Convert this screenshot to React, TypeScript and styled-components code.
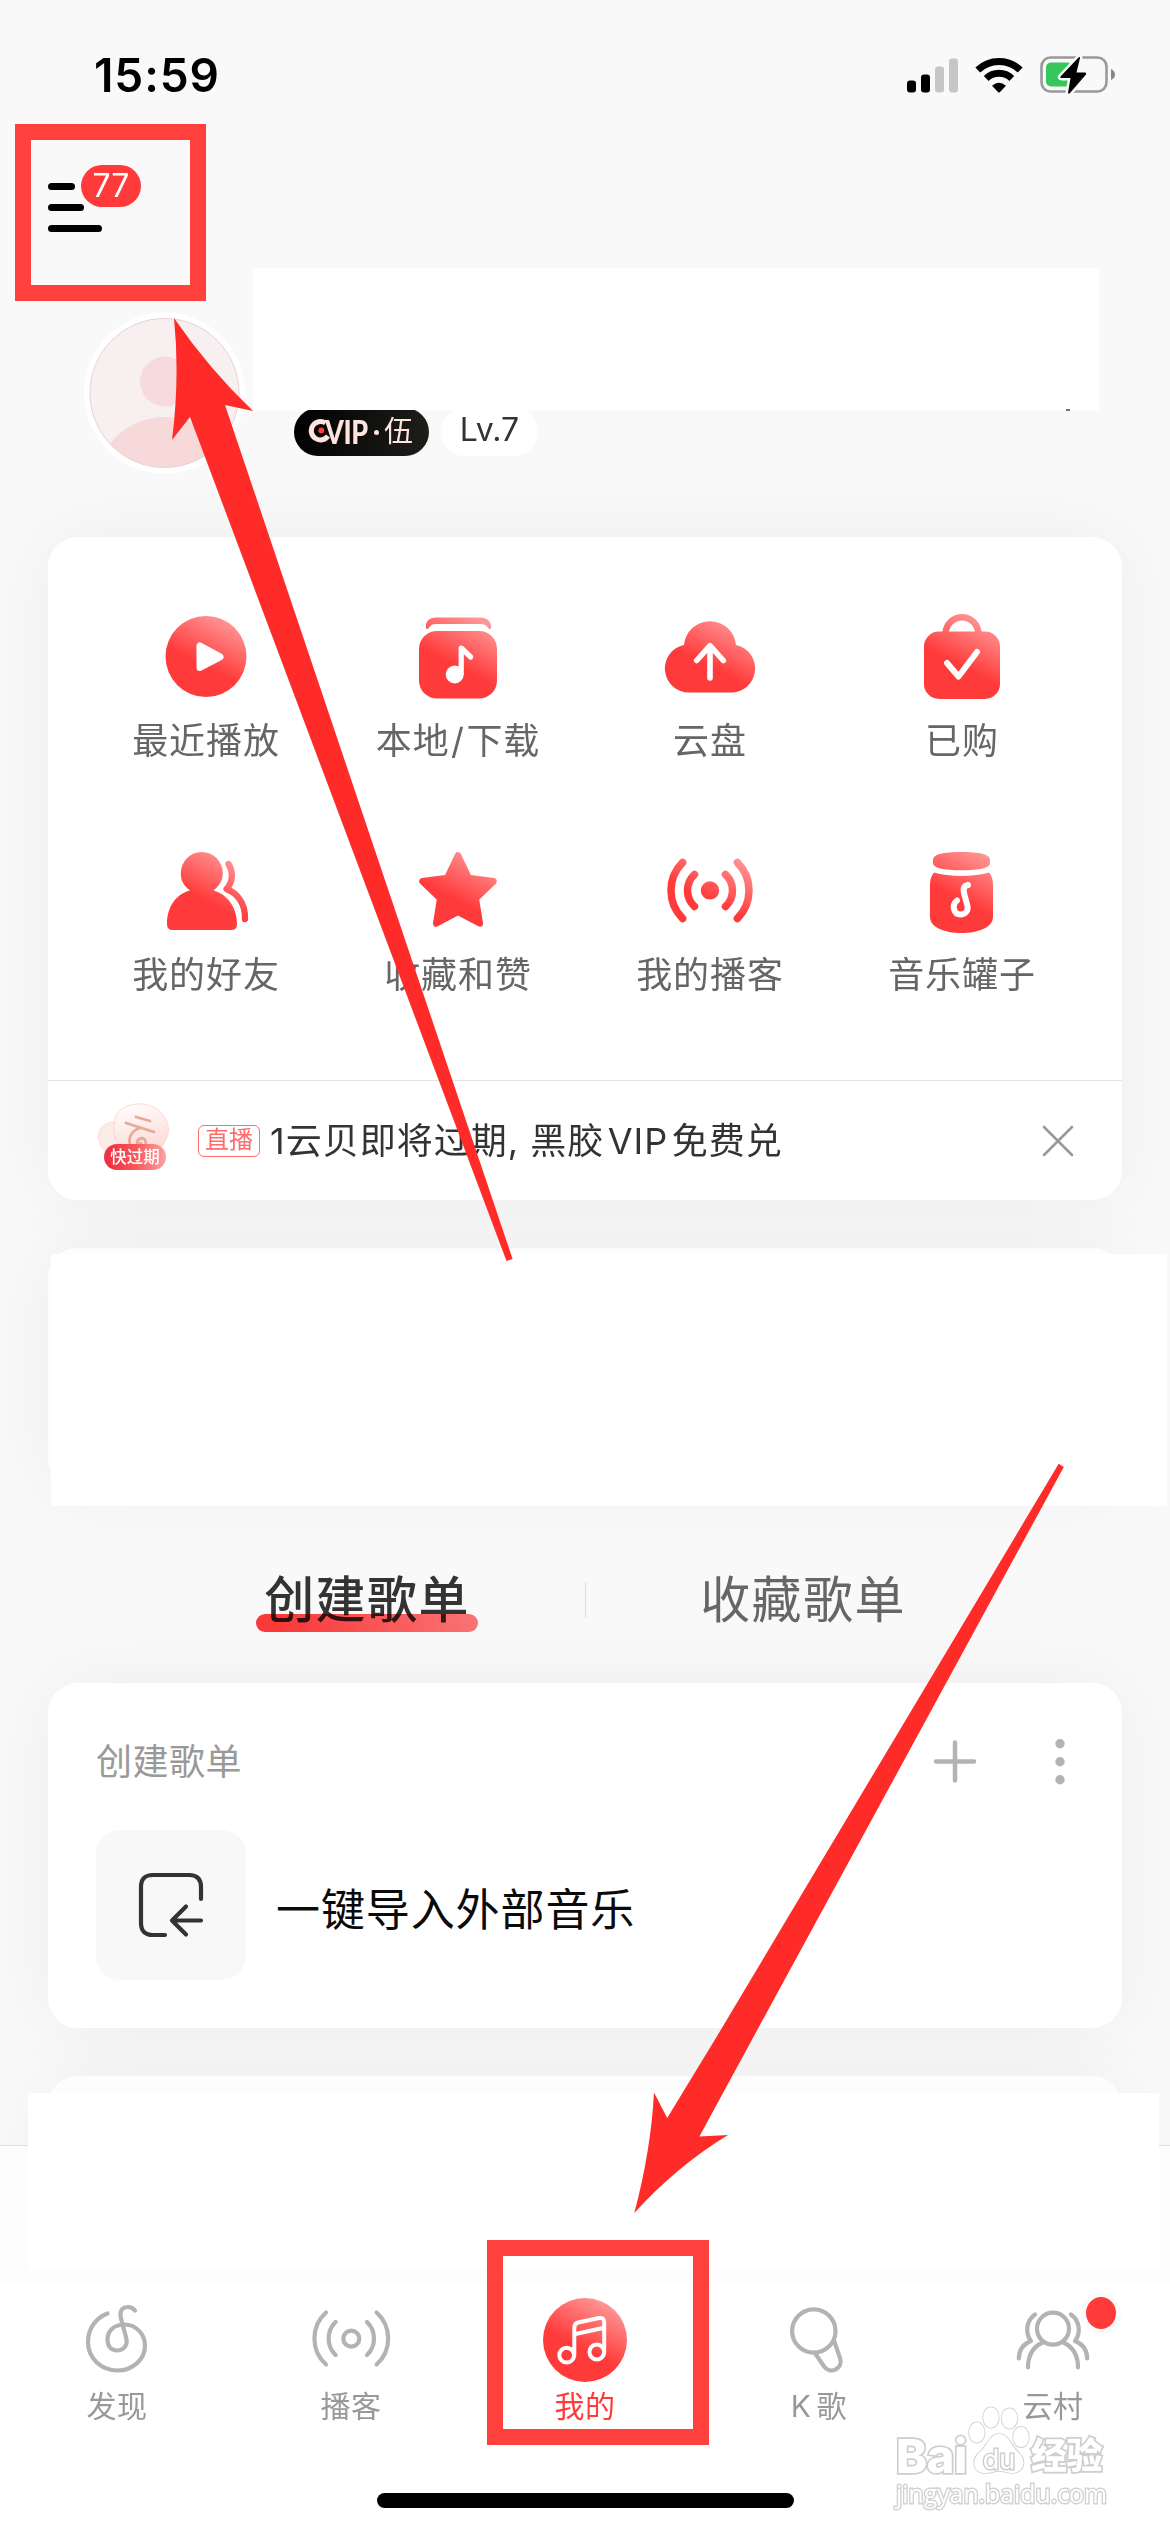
import React from "react";
import styled, { createGlobalStyle, css } from "styled-components";

const RED = "#ff3a3a";
const GREY = "#b3b3b3";

const GlobalStyle = createGlobalStyle`
  * { box-sizing: border-box; }
  body {
    margin: 0;
    background: #fff;
    font-family: Inter, "Noto Sans CJK SC", sans-serif;
  }
  svg { display: block; flex: none; }
`;

const Screen = styled.div`
  position: relative;
  z-index: 0;
  width: 1170px;
  height: 2532px;
  overflow: hidden;
  display: flex;
  flex-direction: column;
  background: #faf9fa;
`;

/* ---------- status bar ---------- */

const StatusBar = styled.header`
  flex: none;
  height: 149px;
  padding: 0 55px 0 94px;
  display: flex;
  align-items: center;
  justify-content: space-between;
`;

const Clock = styled.span`
  font-size: 46px;
  font-weight: 600;
  line-height: 50px;
  letter-spacing: 0.9px;
  color: #000;
`;

const StatusIcons = styled.div`
  display: flex;
  align-items: center;
  gap: 17px;
`;

/* ---------- header ---------- */

const TopBar = styled.div`
  flex: none;
  height: 119px;
  padding: 16px 48px 0;
  display: flex;
  align-items: flex-start;
`;

const MenuButton = styled.div`
  position: relative;
  display: flex;
  flex-direction: column;
  gap: 14px;
  padding-top: 18px;
`;

const MenuLine = styled.i<{ $w: number }>`
  width: ${(p) => p.$w}px;
  height: 7px;
  border-radius: 4px;
  background: #000;
`;

const CountBadge = styled.span`
  position: absolute;
  left: 33px;
  top: 0;
  width: 60px;
  height: 42px;
  border-radius: 21px;
  background: ${RED};
  color: #fff;
  font-size: 32px;
  line-height: 42px;
  text-align: center;
`;

const Profile = styled.section`
  flex: none;
  height: 269px;
  padding-left: 84px;
  display: flex;
  align-items: flex-start;
`;

const Avatar = styled.div`
  margin-top: 44px;
  width: 161px;
  height: 162px;
`;

const ProfileInfo = styled.div`
  margin-left: 8px;
  display: flex;
  flex-direction: column;
`;

const NameBlock = styled.div`
  position: relative;
  z-index: 1;
  width: 846px;
  height: 142px;
  background: #fff;
  &::after {
    content: "";
    position: absolute;
    left: 813px;
    bottom: -1px;
    width: 4px;
    height: 2px;
    background: #777;
  }
`;

const Badges = styled.div`
  margin: -2px 0 0 41px;
  display: flex;
  gap: 12px;
`;

const VipBadge = styled.span`
  width: 135px;
  height: 48px;
  padding-left: 14px;
  border-radius: 24px;
  display: flex;
  align-items: center;
  background: linear-gradient(100deg, #000, #1e1e1b);
  color: #ffe3df;
  font-size: 29px;
  line-height: 44px;
`;

const VipWord = styled.b`
  width: 44px;
  margin-left: -7px;
  font-family: Lato, Inter, sans-serif;
  font-weight: 900;
  font-size: 32px;
  letter-spacing: -0.5px;
  transform: scaleX(0.84);
  transform-origin: left;
`;

const VipDot = styled.i`
  width: 5px;
  height: 5px;
  border-radius: 50%;
  background: #ffe3df;
  margin: 0 5px 0 5px;
`;

const LevelBadge = styled.span`
  width: 97px;
  height: 48px;
  border-radius: 24px;
  background: #fff;
  color: #333;
  font-size: 32px;
  line-height: 43px;
  text-align: center;
`;

/* ---------- cards ---------- */

const Card = styled.section<{ $h: number; $gap?: number; $fill?: string }>`
  position: relative;
  flex: none;
  width: 1074px;
  height: ${(p) => p.$h}px;
  margin: 0 48px ${(p) => p.$gap ?? 0}px;
  border-radius: 30px;
  background: ${(p) => p.$fill ?? "#fff"};
  &::before {
    content: "";
    position: absolute;
    inset: 0;
    z-index: -1;
    border-radius: 30px;
    box-shadow: 0 0 80px rgba(0, 0, 0, 0.052);
  }
`;

const ShortcutGrid = styled.div`
  height: 543px;
  padding: 72px 32px 0;
  display: grid;
  grid-template-columns: repeat(4, 252px);
  grid-auto-rows: 234px;
`;

const Shortcut = styled.div`
  display: flex;
  flex-direction: column;
  align-items: center;
  gap: 12px;
`;

const ShortcutLabel = styled.span`
  font-size: 36px;
  line-height: 48px;
  letter-spacing: 0.9px;
  color: #666;
  white-space: nowrap;
`;

const Spaced = styled.span<{ $gap: number }>`
  margin: 0 ${(p) => p.$gap}px;
`;

const Notice = styled.div`
  height: 120px;
  padding: 0 48px;
  border-top: 1px solid #e4e4e4;
  display: flex;
  align-items: center;
`;

const CoinIcon = styled.div`
  position: relative;
  width: 76px;
  height: 72px;
  margin-top: -6px;
`;

const CoinLabel = styled.span`
  position: absolute;
  left: 8px;
  bottom: 4px;
  width: 62px;
  height: 26px;
  border-radius: 13px;
  background: linear-gradient(90deg, #ee3444 10%, #fb5558 50%, #f9a3a3);
  color: #fff;
  font-size: 16.5px;
  font-weight: 500;
  line-height: 26px;
  text-align: center;
`;

const LiveTag = styled.span`
  width: 62px;
  height: 32px;
  margin-left: 26px;
  border: 1.5px solid #ff7070;
  border-radius: 6px;
  color: #ff6a6a;
  font-size: 24px;
  line-height: 28px;
  text-align: center;
`;

const NoticeText = styled.span`
  flex: 1;
  margin-left: 10px;
  color: #333;
  font-size: 36px;
  line-height: 48px;
  letter-spacing: 1px;
  white-space: nowrap;
`;

const Cover = styled.div<{ $x: number; $y: number; $w: number; $h: number }>`
  position: absolute;
  left: ${(p) => p.$x}px;
  top: ${(p) => p.$y}px;
  width: ${(p) => p.$w}px;
  height: ${(p) => p.$h}px;
  background: #fff;
`;

/* ---------- playlist tabs ---------- */

const Tabs = styled.nav`
  flex: none;
  height: 195px;
  padding-top: 28px;
  display: flex;
  align-items: center;
  justify-content: center;
`;

const Tab = styled.div<{ $active?: boolean }>`
  position: relative;
  width: 222px;
  text-align: center;
  font-size: 50px;
  line-height: 66px;
  letter-spacing: 1.4px;
  white-space: nowrap;
  color: #666;
  ${(p) =>
    p.$active &&
    css`
      color: #333;
      font-weight: 500;
      &::after {
        content: "";
        position: absolute;
        left: 0;
        right: 0;
        bottom: 1px;
        height: 18px;
        border-radius: 9px;
        background: linear-gradient(90deg, ${RED} 10%, #ff7676);
        mix-blend-mode: multiply;
      }
    `}
`;

const TabDivider = styled.i`
  width: 1px;
  height: 36px;
  margin: 0 106px 0 107px;
  background: #dcdcdc;
`;

const ListHead = styled.div`
  height: 147px;
  padding: 11px 55px 0 48px;
  display: flex;
  align-items: center;
`;

const ListTitle = styled.span`
  flex: 1;
  color: #999;
  font-size: 36px;
  line-height: 48px;
  letter-spacing: 0.5px;
`;

const ListRow = styled.div`
  padding: 0 48px;
  display: flex;
  align-items: center;
  gap: 30px;
`;

const ImportTile = styled.div`
  width: 150px;
  height: 150px;
  border-radius: 24px;
  background: #f8f8f8;
  display: flex;
  align-items: center;
  justify-content: center;
`;

const RowText = styled.span`
  color: #0a0a0a;
  font-size: 44px;
  line-height: 60px;
  letter-spacing: 0.9px;
  padding-top: 10px;
`;

/* ---------- bottom ---------- */

const BottomArea = styled.div`
  position: absolute;
  left: 0;
  right: 0;
  bottom: 0;
  height: 387px;
  border-top: 1px solid #e2e2e2;
  background: linear-gradient(#fdfdfd 137px, #fff 137px);
  padding-top: 146px;
  display: flex;
  flex-direction: column;
`;

const TabBar = styled.nav`
  display: grid;
  grid-template-columns: repeat(5, 234px);
`;

const TabItem = styled.div<{ $active?: boolean }>`
  position: relative;
  display: flex;
  flex-direction: column;
  align-items: center;
  color: ${(p) => (p.$active ? RED : "#999")};
  font-size: 30px;
  line-height: 37px;
  letter-spacing: 0.6px;
`;

const KaraokeLetter = styled.span`
  margin-right: 5px;
`;

const UnreadDot = styled.i`
  position: absolute;
  left: 145px;
  top: 0;
  width: 40px;
  height: 42px;
  border: 5px solid #fafafa;
  border-radius: 50%;
  background: ${RED};
`;

const HomeIndicator = styled.i`
  width: 417px;
  height: 15px;
  margin: 68px auto 0;
  border-radius: 8px;
  background: #000;
`;

/* ---------- annotations ---------- */

const Highlight = styled.div<{ $x: number; $y: number; $w: number; $h: number }>`
  position: absolute;
  left: ${(p) => p.$x}px;
  top: ${(p) => p.$y}px;
  width: ${(p) => p.$w}px;
  height: ${(p) => p.$h}px;
  border: 16px solid #ff403d;
`;

const Arrows = styled.svg`
  position: absolute;
  left: 0;
  top: 0;
`;

const Watermark = styled.div`
  position: absolute;
  left: 896px;
  top: 2404px;
  color: #fff;
  -webkit-text-stroke: 3.4px #cecece;
  paint-order: stroke fill;
`;

const WatermarkBrand = styled.div`
  display: flex;
  align-items: flex-end;
  height: 72px;
`;

const WatermarkWord = styled.b<{ $size: number; $w: number }>`
  width: ${(p) => p.$w}px;
  font-size: ${(p) => p.$size}px;
  font-weight: 800;
  line-height: 40px;
  letter-spacing: -0.5px;
  white-space: nowrap;
`;

const PawMark = styled.div`
  position: relative;
  width: 63px;
  height: 72px;
`;

const PawText = styled.span`
  position: absolute;
  left: 0;
  bottom: 3px;
  width: 62px;
  text-align: center;
  font-size: 27px;
  line-height: 26px;
  -webkit-text-stroke: 3px #cecece;
`;

const WatermarkUrl = styled.div`
  margin-top: 1px;
  font-family: "Open Sans", "Noto Sans", sans-serif;
  font-size: 24.8px;
  line-height: 32px;
  -webkit-text-stroke: 2.8px #d2d2d2;
`;

/* ---------- icons ---------- */

function Gradient({ id }: { id: string }) {
  return (
    <defs>
      <linearGradient id={id} gradientUnits="userSpaceOnUse" x1="40" y1="54" x2="64" y2="8">
        <stop offset="0" stopColor={RED} />
        <stop offset="1" stopColor="#ff9696" />
      </linearGradient>
    </defs>
  );
}

function Glyph({ id, children }: { id: string; children: (fill: string) => React.ReactNode }) {
  return (
    <svg width="96" height="96" viewBox="0 0 96 96" fill="none" strokeLinecap="round" strokeLinejoin="round">
      <Gradient id={id} />
      {children(`url(#${id})`)}
    </svg>
  );
}

const shortcuts: { id: string; label: React.ReactNode; draw: (f: string) => React.ReactNode }[] = [
  {
    id: "recent",
    label: "最近播放",
    draw: (f) => (
      <>
        <circle cx="48" cy="47.5" r="40.5" fill={f} />
        <path d="M42 37v21.5L62 47.8z" fill="#fff" stroke="#fff" strokeWidth="7" />
      </>
    ),
  },
  {
    id: "local",
    label: (
      <>
        本地<Spaced $gap={1.5}>/</Spaced>下载
      </>
    ),
    draw: (f) => (
      <>
        <path d="M16 19C15 13 19 8.5 26 8.5H70C77 8.5 82 13 81 19C80 21 79 20 78 18.500C76 16 74 15 70 15H26C23 15 21 16 19 18.500C18 20 16.500 21 16 19Z" fill={f} />
        <rect x="9" y="22" width="78" height="67.500" rx="18" fill={f} />
        <circle cx="44.700" cy="65.500" r="9" fill="#fff" />
        <path d="M51.200 64V39l9.500 9" stroke="#fff" strokeWidth="5.200" />
      </>
    ),
  },
  {
    id: "cloud",
    label: "云盘",
    draw: (f) => (
      <>
        <path d="M27 83.500A24 24 0 0 1 22 36A26.100 26.100 0 0 1 74 36A24 24 0 0 1 69 83.500Z" fill={f} />
        <path d="M48 69V37M34.700 51.500L48 36.700l13.300 14.800" stroke="#fff" strokeWidth="5.600" />
      </>
    ),
  },
  {
    id: "bought",
    label: "已购",
    draw: (f) => (
      <>
        <path d="M31.700 26v-1.500a16.300 16.300 0 0 1 32.600 0V26" stroke={f} strokeWidth="6.500" strokeLinecap="butt" />
        <rect x="10" y="22.500" width="76" height="67.500" rx="15" fill={f} />
        <path d="M33 54l11.500 13.500L63 43" stroke="#fff" strokeWidth="6" />
      </>
    ),
  },
  {
    id: "friends",
    label: "我的好友",
    draw: (f) => (
      <>
        <path d="M32 47.500C25 42 22.800 37 22.800 30a21 21 0 0 1 42 0C64.800 37 62 42 55.500 47.500C69 51 79 64 79 81Q79 87 73.500 87H14.500Q9 87 9 81C9 64 18 51 32 47.500Z" fill={f} />
        <path d="M70.500 21C75.500 29 75 39 68.500 46C79 50 87.500 60 87 76" stroke={f} strokeWidth="6.300" />
      </>
    ),
  },
  {
    id: "star",
    label: "收藏和赞",
    draw: (f) => (
      <path
        d="M48 12.500L58.700 35L83.500 38.300L65.800 55.500L69.800 80.500L48 69L26.200 80.500L30.200 55.500L12.500 38.300L37.300 35Z"
        fill={f}
        stroke={f}
        strokeWidth="6.500"
      />
    ),
  },
  {
    id: "podcast",
    label: "我的播客",
    draw: (f) => (
      <>
        <circle cx="48" cy="47.400" r="9.200" fill={f} />
        <path
          d="M32.500 31.500A21.800 21.800 0 0 0 32.500 63.500M63.500 31.500A21.800 21.800 0 0 1 63.500 63.500M20.600 19.500A39.600 39.600 0 0 0 20.600 75.500M75.400 19.500A39.600 39.600 0 0 1 75.400 75.500"
          stroke={f}
          strokeWidth="7.500"
        />
      </>
    ),
  },
  {
    id: "jar",
    label: "音乐罐子",
    draw: (f) => (
      <>
        <path d="M19 17C19 11 30 9 47.500 9S76 11 76 17V20C76 25 66 27.300 47.500 27.300S19 25 19 20Z" fill={f} />
        <path d="M20 29.500C35 34 60 34 75 29.500Q79 34 79 42V74C79 84 65 90 47.500 90S16 84 16 74V42Q16 34 20 29.500Z" fill={f} />
        <path d="M54 42C49 43 49 46 50.500 52L53.500 63C54.500 68 51 71.500 46.500 71.500C40 71.500 37 62.500 43 57.500" stroke="#fff" strokeWidth="6" />
      </>
    ),
  },
];

const tabItems: { id: string; label: React.ReactNode; active?: boolean; dot?: boolean; draw: (f: string) => React.ReactNode }[] = [
  {
    id: "discover",
    label: "发现",
    draw: () => (
      <path
        d="M38.500 21.500C27 26 19 36 19 50C19 66 32 78.500 48.500 78.500C64 78.500 76 67 76 54C76 41 66 32.500 55.500 32.500C45 32.500 38.500 39 38.500 47.500C38.500 54 42 58.500 48 58.500C54 58.500 58 54 57.700 49C57.300 44 52 29 51.500 23.500C51 17 55 15 59 15C62 15 64.500 16.500 66 18.500"
        stroke={GREY}
        strokeWidth="4.200"
      />
    ),
  },
  {
    id: "cast",
    label: "播客",
    draw: () => (
      <g stroke={GREY} strokeWidth="4.200">
        <circle cx="48.300" cy="46.700" r="8" />
        <path d="M32.600 30A23 23 0 0 0 32.600 63M64 30A23 23 0 0 1 64 63M23 20.500A35 35 0 0 0 23 72.500M73.600 20.500A35 35 0 0 1 73.600 72.500" />
      </g>
    ),
  },
  {
    id: "mine",
    label: "我的",
    active: true,
    draw: (f) => (
      <>
        <circle cx="48" cy="48" r="42" fill={f} />
        <g stroke="#fff" strokeWidth="4">
          <circle cx="29.700" cy="63.200" r="7.400" />
          <circle cx="59.800" cy="60" r="7.400" />
          <path d="M37.300 63V36Q37.300 31.500 41 30.500L62 26Q67.200 25.500 67.200 30V60M37.300 42.200L67.200 35.700" />
        </g>
      </>
    ),
  },
  {
    id: "karaoke",
    label: (
      <span>
        <KaraokeLetter>K</KaraokeLetter>歌
      </span>
    ),
    draw: () => (
      <g stroke={GREY} strokeWidth="4.200">
        <ellipse cx="42.800" cy="39" rx="21.700" ry="21.700" />
        <path d="M44.500 62L53.500 75C60 83 72 76 69.300 67L63.500 50" />
      </g>
    ),
  },
  {
    id: "village",
    label: "云村",
    dot: true,
    draw: () => (
      <g stroke={GREY} strokeWidth="4.200">
        <circle cx="48" cy="36.700" r="16" />
        <path d="M23 75.500C23 63 29 54.500 37.500 50.500M73 75.500C73 63 67 54.500 58.500 50.500M30 22.500C21 29 20 41 26 49C18 52 14 58 13.800 66.500M66 22.500C75 29 76 41 70 49C78 52 82 58 82.200 66.500" />
      </g>
    ),
  },
];

function SignalIcon() {
  return (
    <svg width="51" height="36" viewBox="0 0 51 36">
      <rect x="0" y="23.500" width="9" height="12" rx="3" />
      <rect x="14" y="17.500" width="9" height="18" rx="3" />
      <rect x="28" y="9.500" width="9" height="26" rx="3" fill="#c6c6c6" />
      <rect x="42" y="1.500" width="9" height="34" rx="3" fill="#c6c6c6" />
    </svg>
  );
}

function WifiIcon() {
  return (
    <svg width="48" height="36" viewBox="0 0 48 36">
      <path d="M2.800 13A30.500 30.500 0 0 1 45.200 13" fill="none" stroke="#000" strokeWidth="7" />
      <path d="M11.200 21.500A18.500 18.500 0 0 1 36.800 21.500" fill="none" stroke="#000" strokeWidth="7" />
      <path d="M17 28.800Q24 22.800 31 28.800L25 35Q24 36 23 35Z" />
    </svg>
  );
}

function BatteryIcon() {
  return (
    <svg width="75" height="38" viewBox="0 0 75 38">
      <rect x="1.500" y="1.500" width="65" height="34" rx="9" fill="none" stroke="#999" strokeWidth="2.600" />
      <path d="M71 13Q75 15 75 18.500T71 24Z" fill="#888" />
      <rect x="6" y="6.500" width="26" height="24" rx="5" fill="#35c759" />
      <path
        d="M39 1L20.500 20.500Q20 22 21.500 22H30.500L28 37Q28.500 38.500 30 37L46 18.500Q46.500 16.500 45 16.500H36.500L40 2Q40 0.500 39 1Z"
        stroke="#faf9fa"
        strokeWidth="5"
        paintOrder="stroke"
      />
    </svg>
  );
}

export default function App() {
  return (
    <>
      <GlobalStyle />
      <Screen>
        <StatusBar>
          <Clock>15:59</Clock>
          <StatusIcons>
            <SignalIcon />
            <WifiIcon />
            <BatteryIcon />
          </StatusIcons>
        </StatusBar>

        <TopBar>
          <MenuButton>
            <MenuLine $w={27} />
            <MenuLine $w={36} />
            <MenuLine $w={54} />
            <CountBadge>77</CountBadge>
          </MenuButton>
        </TopBar>

        <Profile>
          <Avatar>
            <svg width="161" height="162" viewBox="0 0 161 162">
              <defs>
                <clipPath id="avatar-clip">
                  <circle cx="80.500" cy="81" r="74.500" />
                </clipPath>
              </defs>
              <circle cx="80.500" cy="81" r="80.500" fill="#fff" />
              <g clipPath="url(#avatar-clip)">
                <rect width="161" height="162" fill="#f8f0f0" />
                <circle cx="81" cy="69.500" r="25" fill="#f7dadd" />
                <circle cx="81" cy="176" r="71" fill="#f7d9da" />
              </g>
              <circle cx="80.500" cy="81" r="74.500" fill="none" stroke="#e3d3d4" />
            </svg>
          </Avatar>
          <ProfileInfo>
            <NameBlock />
            <Badges>
              <VipBadge>
                <svg width="24" height="28" viewBox="0 0 24 28">
                  <path d="M17.500 5A9.200 9.200 0 1 0 20 18" fill="none" stroke="#ffe3df" strokeWidth="5" />
                  <circle cx="13.300" cy="12.500" r="2.900" fill="#ff3a3a" />
                </svg>
                <VipWord>VIP</VipWord>
                <VipDot />伍
              </VipBadge>
              <LevelBadge>Lv.7</LevelBadge>
            </Badges>
          </ProfileInfo>
        </Profile>

        <Card $h={663} $gap={48}>
          <ShortcutGrid>
            {shortcuts.map((s) => (
              <Shortcut key={s.id}>
                <Glyph id={s.id}>{s.draw}</Glyph>
                <ShortcutLabel>{s.label}</ShortcutLabel>
              </Shortcut>
            ))}
          </ShortcutGrid>
          <Notice>
            <CoinIcon>
              <svg width="76" height="72" viewBox="0 0 76 72">
                <defs>
                  <linearGradient id="coin" x1="0" y1="0" x2="0.300" y2="1">
                    <stop offset="0" stopColor="#fff" />
                    <stop offset="1" stopColor="#fcdcd8" />
                  </linearGradient>
                </defs>
                <path d="M10 50C-2 40 0 20 19 20L28 52Z" fill="#fdebe8" stroke="#fbdcd8" />
                <path d="M18 22C19 7 33 1 46 2C64 3 75 20 72 32C68 47 58 54 40 52C24 50 17 38 18 22Z" fill="url(#coin)" stroke="#fbd9d4" />
                <g fill="none" stroke="#e8aa98" strokeWidth="2.800" strokeLinecap="round">
                  <path d="M40 15L54 19M30 21L58 30M44 26C30 30 30 48 43 48C53 46 51 33 43 37C39 41 42 44 45 41" />
                </g>
              </svg>
              <CoinLabel>快过期</CoinLabel>
            </CoinIcon>
            <LiveTag>直播</LiveTag>
            <NoticeText>
              1云贝即将过期, 黑胶<Spaced $gap={3.5}>VIP</Spaced>免费兑
            </NoticeText>
            <svg width="32" height="32" viewBox="0 0 32 32" stroke="#999" strokeWidth="2.600" strokeLinecap="round">
              <path d="M2 2L30 30M30 2L2 30" />
            </svg>
          </Notice>
        </Card>

        <Card $h={240} $fill="#fdfdfd">
          <Cover $x={3} $y={6} $w={1116} $h={252} />
        </Card>

        <Tabs>
          <Tab $active>创建歌单</Tab>
          <TabDivider />
          <Tab>收藏歌单</Tab>
        </Tabs>

        <Card $h={345} $gap={48}>
          <ListHead>
            <ListTitle>创建歌单</ListTitle>
            <svg width="136" height="46" viewBox="0 0 136 46" fill={GREY}>
              <path d="M24 3.500V41.500M5 22.500H43" stroke={GREY} strokeWidth="4.500" strokeLinecap="round" />
              <circle cx="129" cy="4.700" r="4.700" />
              <circle cx="129" cy="22.700" r="4.700" />
              <circle cx="129" cy="40.700" r="4.700" />
            </svg>
          </ListHead>
          <ListRow>
            <ImportTile>
              <svg width="68" height="68" viewBox="0 0 68 68" fill="none" stroke="#333" strokeWidth="4.200" strokeLinecap="round" strokeLinejoin="round">
                <path d="M28 64H16Q4 64 4 52V16Q4 4 16 4H52Q64 4 64 16V28" />
                <path d="M64 49.500H35M49 35.500L35 49.500L49 63.500" />
              </svg>
            </ImportTile>
            <RowText>一键导入外部音乐</RowText>
          </ListRow>
        </Card>

        <Card $h={240} $fill="#fdfdfd" />

        <BottomArea>
          <Cover $x={28} $y={-53} $w={1131} $h={176} />
          <TabBar>
            {tabItems.map((t) => (
              <TabItem key={t.id} $active={t.active}>
                <Glyph id={t.id}>{t.draw}</Glyph>
                {t.label}
                {t.dot && <UnreadDot />}
              </TabItem>
            ))}
          </TabBar>
          <HomeIndicator />
        </BottomArea>

        <Highlight $x={15} $y={124} $w={191} $h={177} />
        <Highlight $x={487} $y={2240} $w={222} $h={205} />

        <Arrows width="1170" height="2532" viewBox="0 0 1170 2532" fill="#ff2b28">
          <path d="M174 318Q180 378 172 440L190 417L506.500 1261L512.600 1259L225 405L253 411Q209 369 174 318Z" />
          <path d="M634.300 2213Q651 2150 654 2092.500L667.200 2118L714.700 2040L1058.700 1463.700L1063.800 1467L751.800 2040L699.400 2136.500L728 2135Q677 2166 634.300 2213Z" />
        </Arrows>

        <Watermark>
          <WatermarkBrand>
            <WatermarkWord $size={47} $w={72}>Bai</WatermarkWord>
            <PawMark>
              <svg width="62" height="72" viewBox="0 0 62 72" fill="#fff" stroke="#cecece" strokeWidth="1.700">
                <path d="M31 30C41 30 43 42 51 49C59 57 56 68 45 69C39 69 37 67 31 67S21 70 15 69C4 67 4 55 11 49C19 43 21 30 31 30Z" />
                <ellipse cx="8.800" cy="28.500" rx="7.800" ry="10.200" />
                <ellipse cx="23" cy="13.500" rx="7.800" ry="10.200" />
                <ellipse cx="41.500" cy="14.500" rx="7.800" ry="10.200" />
                <ellipse cx="53" cy="33" rx="7.800" ry="10.200" />
              </svg>
              <PawText>du</PawText>
            </PawMark>
            <WatermarkWord $size={36} $w={72}>经验</WatermarkWord>
          </WatermarkBrand>
          <WatermarkUrl>jingyan.baidu.com</WatermarkUrl>
        </Watermark>
      </Screen>
    </>
  );
}
